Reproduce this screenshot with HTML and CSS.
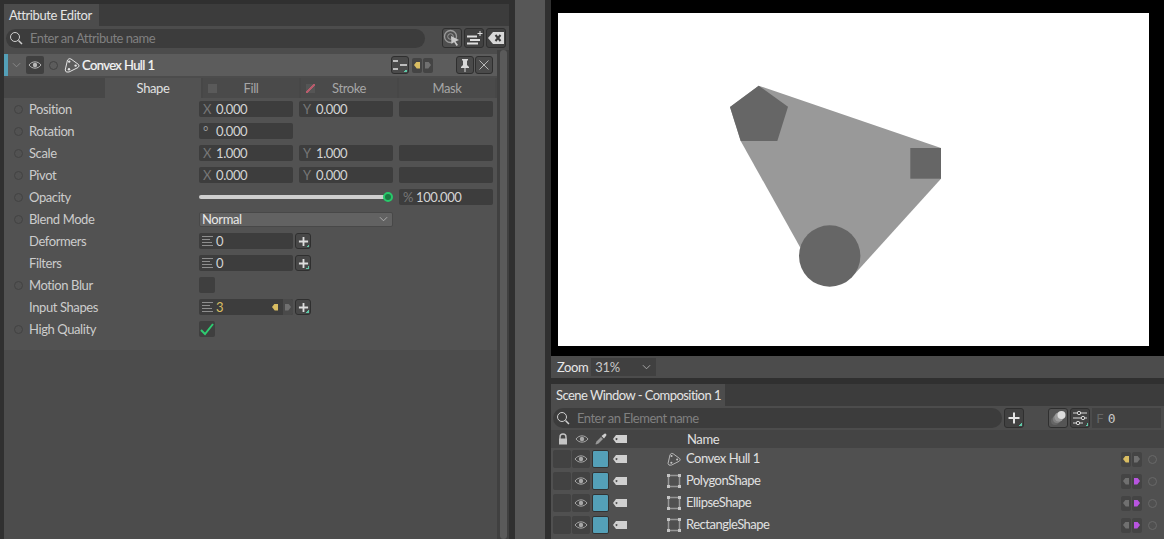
FILE: index.html
```html
<!DOCTYPE html>
<html lang="en">
<head>
  <meta charset="UTF-8">
  <title>Attribute Editor</title>
  <link rel="stylesheet" href="styles.css">
</head>
<body>

  <svg class="defs" width="0" height="0">
    <symbol id="eye" viewBox="0 0 14 10"><path d="M1 5 C4 .8 10 .8 13 5 C10 9.2 4 9.2 1 5Z" fill="none" stroke="currentColor"/><circle cx="7" cy="5" r="2.2" fill="currentColor"/></symbol>
    <symbol id="hull" viewBox="0 0 16 16"><path d="M3.5 3 Q5 .8 7 2 L14.5 7.5 Q16 9 14 10.5 L5 15 Q1.5 16 1.2 13 Z" fill="none" stroke="currentColor"/><circle cx="5.2" cy="4.6" r="1.2" fill="currentColor"/><circle cx="11.6" cy="8.6" r="1.2" fill="currentColor"/><circle cx="5" cy="12.2" r="1.2" fill="currentColor"/></symbol>
    <symbol id="shape" viewBox="0 0 14 14"><path d="M2 1.5H12M12.5 2V12M12 12.5H2M1.5 12V2" fill="none" stroke="#969696" stroke-width="1.5"/><path d="M0 0h3v3H0zM11 0h3v3h-3zM0 11h3v3H0zM11 11h3v3h-3z" fill="currentColor"/></symbol>
    <symbol id="tag" viewBox="0 0 14 8"><path d="M3 0H14V8H3L0 4Z M3.5 3a1 1 0 1 0 .01 0Z" fill="currentColor" fill-rule="evenodd"/></symbol>
    <symbol id="list" viewBox="0 0 11 11"><path d="M0 .5H11M0 3.5H8M0 6.5H10M0 9.5H11" stroke="currentColor"/></symbol>
    <symbol id="plus" viewBox="0 0 12 12"><path d="M6 1V11M1 6H11" stroke="currentColor" stroke-width="2"/></symbol>
    <symbol id="search" viewBox="0 0 14 14"><circle cx="6" cy="6" r="4.5" fill="none" stroke="currentColor"/><path d="M9.5 9.5L13 13" stroke="currentColor" stroke-width="1.5"/></symbol>
    <symbol id="chev" viewBox="0 0 10 6"><path d="M1 1L5 5L9 1" fill="none" stroke="currentColor"/></symbol>
  </svg>

  <div class="app">

    <section class="editor">
      <div class="tabbar"><div class="tab">Attribute Editor</div></div>
      <div class="editor-body">
        <div class="search-row">
          <div class="search search-attr">
            <svg class="ic-search"><use href="#search"/></svg>
            <span>Enter an Attribute name</span>
          </div>
          <span class="tool light">
            <svg viewBox="0 0 18 18"><circle cx="7.5" cy="7.5" r="6" fill="none" stroke="#9a9a9a" stroke-width="1.3"/><circle cx="7.5" cy="7.5" r="2.8" fill="none" stroke="#9a9a9a"/><path d="M8 7L16 11L12.5 12.5L15 16L13.5 17L11 13L8.5 15Z" fill="#c8c8c8"/></svg>
          </span>
          <span class="tool">
            <svg viewBox="0 0 18 18"><path d="M2 7.5H12M5 11H15M2 14.5H13" stroke="#e0e0e0" stroke-width="2"/><path d="M15 2V7M12.5 4.5H17.5" stroke="#e0e0e0"/></svg>
          </span>
          <span class="tool">
            <svg viewBox="0 0 18 18"><path d="M6 3H17V15H6L1 9Z" fill="#d8d8d8"/><path d="M8.5 6L13.5 12M13.5 6L8.5 12" stroke="#3a3a3a" stroke-width="2"/></svg>
          </span>
        </div>

        <div class="editor-main">
          <div class="editor-content">
            <div class="layer-head">
              <svg class="ic-chev"><use href="#chev"/></svg>
              <span class="eye-btn"><svg class="ic-eye"><use href="#eye"/></svg></span>
              <span class="dot"></span>
              <svg class="ic-hull"><use href="#hull"/></svg>
              <span class="layer-name">Convex Hull 1</span>
              <span class="head-right">
                <span class="tool small">
                  <svg viewBox="0 0 16 16"><path d="M1 4H6M1 12H6M8 8H15" stroke="#e4e4e4" stroke-width="1.6"/></svg>
                  <i class="corner"></i>
                </span>
                <span class="keys">
                  <span class="key"><i class="arrow-l yellow"></i></span>
                  <span class="key"><i class="arrow-r grey"></i></span>
                </span>
                <span class="tool small pin">
                  <svg viewBox="0 0 16 16"><path d="M5 2H11V3L10 4V8L12 10V11H4V10L6 8V4L5 3Z M7.5 11H8.5V15H7.5Z" fill="#d8d8d8"/></svg>
                </span>
                <span class="tool small">
                  <svg viewBox="0 0 16 16"><path d="M3.5 3.5L12.5 12.5M12.5 3.5L3.5 12.5" stroke="#b8b8b8"/></svg>
                </span>
              </span>
            </div>

            <div class="subtabs">
              <div class="subtab active">Shape</div>
              <div class="subtab"><i class="swatch"></i>Fill</div>
              <div class="subtab"><i class="swatch stroke"></i>Stroke</div>
              <div class="subtab">Mask</div>
            </div>

            <div class="rows">
              <div class="row"><span class="dot"></span><label>Position</label>
                <div class="field"><b>X</b>0.000</div><div class="field"><b>Y</b>0.000</div><div class="field"></div></div>
              <div class="row"><span class="dot"></span><label>Rotation</label>
                <div class="field"><b class="deg">°</b>0.000</div></div>
              <div class="row"><span class="dot"></span><label>Scale</label>
                <div class="field"><b>X</b>1.000</div><div class="field"><b>Y</b>1.000</div><div class="field"></div></div>
              <div class="row"><span class="dot"></span><label>Pivot</label>
                <div class="field"><b>X</b>0.000</div><div class="field"><b>Y</b>0.000</div><div class="field"></div></div>
              <div class="row"><span class="dot"></span><label>Opacity</label>
                <div class="slider"><i class="knob"></i></div>
                <div class="field"><b>%</b>100.000</div></div>
              <div class="row"><span class="dot"></span><label>Blend Mode</label>
                <div class="select">Normal<svg class="ic-chev"><use href="#chev"/></svg></div></div>
              <div class="row"><span class="dot none"></span><label>Deformers</label>
                <div class="field list"><svg class="ic-list"><use href="#list"/></svg>0</div>
                <span class="add"><svg><use href="#plus"/></svg><i class="corner"></i></span></div>
              <div class="row"><span class="dot none"></span><label>Filters</label>
                <div class="field list"><svg class="ic-list"><use href="#list"/></svg>0</div>
                <span class="add"><svg><use href="#plus"/></svg><i class="corner"></i></span></div>
              <div class="row"><span class="dot"></span><label>Motion Blur</label>
                <span class="check"></span></div>
              <div class="row"><span class="dot none"></span><label>Input Shapes</label>
                <div class="field list animated"><svg class="ic-list"><use href="#list"/></svg>3
                  <span class="inline-keys"><i class="arrow-l yellow"></i><span class="key-r"><i class="arrow-r grey"></i></span></span></div>
                <span class="add"><svg><use href="#plus"/></svg><i class="corner"></i></span></div>
              <div class="row"><span class="dot"></span><label>High Quality</label>
                <span class="check"><svg viewBox="0 0 16 16"><path d="M2 9L6 13L14 3" fill="none" stroke="#2ecc71" stroke-width="2"/></svg></span></div>
            </div>
          </div>
          <div class="scrollbar"><div class="thumb"></div></div>
        </div>
      </div>
    </section>

    <div class="gutter"></div>

    <section class="right">
      <div class="viewer">
        <svg class="canvas" viewBox="558 13 591 333">
          <rect x="558" y="13" width="591" height="333" fill="#fff"/>
          <path d="M758.7 85.7L941 148V178.7L851 278L800.5 248L740.7 141L730 107Z" fill="#999"/>
          <path d="M758.7 85.7L788 106.7L777.3 141H740.7L730 107Z" fill="#666"/>
          <rect x="910.3" y="148" width="30.7" height="30.7" fill="#666"/>
          <circle cx="829.7" cy="256" r="30.7" fill="#666"/>
        </svg>
      </div>

      <div class="zoom-bar">
        <span>Zoom</span>
        <div class="zoom-select">31%<svg class="ic-chev"><use href="#chev"/></svg></div>
      </div>

      <div class="scene">
        <div class="tabbar"><div class="tab">Scene Window - Composition 1</div></div>
        <div class="scene-search">
          <div class="search search-el">
            <svg class="ic-search"><use href="#search"/></svg>
            <span>Enter an Element name</span>
          </div>
          <span class="tool"><svg viewBox="0 0 18 18"><path d="M9 3.5V14.5M3.5 9H14.5" stroke="#e4e4e4" stroke-width="2"/></svg><i class="corner"></i></span>
          <span class="tool motion"><svg viewBox="0 0 18 18"><circle cx="6" cy="12" r="4" fill="#666"/><circle cx="8" cy="10" r="4" fill="#808080"/><circle cx="10" cy="8" r="4.5" fill="#999"/><circle cx="12.5" cy="6" r="4" fill="#dcdcdc"/></svg></span>
          <span class="tool"><svg viewBox="0 0 18 18"><path d="M2 4H6M10 4H16M2 9H10M14 9H16M2 14H5M9 14H12" stroke="#d8d8d8"/><circle cx="8" cy="4" r="1.7" fill="none" stroke="#d8d8d8"/><circle cx="12" cy="9" r="1.7" fill="none" stroke="#d8d8d8"/><circle cx="7" cy="14" r="1.7" fill="none" stroke="#d8d8d8"/></svg><i class="corner"></i></span>
          <div class="frame"><b>F</b>0</div>
        </div>

        <div class="scene-head">
          <svg class="col-ic" viewBox="0 0 12 12"><path d="M3 6V4a3 3 0 0 1 6 0V6" fill="none" stroke="#c4c4c4" stroke-width="1.4"/><rect x="2" y="5.5" width="8" height="6" fill="#c4c4c4"/></svg>
          <svg class="col-eye"><use href="#eye"/></svg>
          <svg class="col-ic" viewBox="0 0 12 12"><path d="M1 11.5L.5 11L1.5 8.5L6 4L8 6L3.5 10.5Z" fill="#999"/><path d="M6.5 3L8.5 1.5Q10 0 11.2 1Q12 2.2 10.5 3.5L9 5.5Z" fill="#d0d0d0"/></svg>
          <svg class="col-tag"><use href="#tag"/></svg>
          <span class="col-name">Name</span>
        </div>

        <div class="scene-row">
          <span class="cell"></span><span class="cell"><svg class="col-eye"><use href="#eye"/></svg></span><span class="color"></span><svg class="col-tag"><use href="#tag"/></svg>
          <svg class="el-ic"><use href="#hull"/></svg><span class="el-name">Convex Hull 1</span>
          <span class="el-keys"><span class="key"><i class="arrow-l yellow"></i></span><span class="key"><i class="arrow-r grey"></i></span></span><span class="dot"></span>
        </div>
        <div class="scene-row">
          <span class="cell"></span><span class="cell"><svg class="col-eye"><use href="#eye"/></svg></span><span class="color"></span><svg class="col-tag"><use href="#tag"/></svg>
          <svg class="el-ic"><use href="#shape"/></svg><span class="el-name">PolygonShape</span>
          <span class="el-keys"><span class="key"><i class="arrow-l grey"></i></span><span class="key"><i class="arrow-r purple"></i></span></span><span class="dot"></span>
        </div>
        <div class="scene-row">
          <span class="cell"></span><span class="cell"><svg class="col-eye"><use href="#eye"/></svg></span><span class="color"></span><svg class="col-tag"><use href="#tag"/></svg>
          <svg class="el-ic"><use href="#shape"/></svg><span class="el-name">EllipseShape</span>
          <span class="el-keys"><span class="key"><i class="arrow-l grey"></i></span><span class="key"><i class="arrow-r purple"></i></span></span><span class="dot"></span>
        </div>
        <div class="scene-row">
          <span class="cell"></span><span class="cell"><svg class="col-eye"><use href="#eye"/></svg></span><span class="color"></span><svg class="col-tag"><use href="#tag"/></svg>
          <svg class="el-ic"><use href="#shape"/></svg><span class="el-name">RectangleShape</span>
          <span class="el-keys"><span class="key"><i class="arrow-l grey"></i></span><span class="key"><i class="arrow-r purple"></i></span></span><span class="dot"></span>
        </div>
      </div>
    </section>
  </div>

</body>
</html>
```

FILE: styles.css
```css
:root {
  --dark: #303030;
  --strip: #3c3c3c;
  --panel: #4c4c4c;
  --body: #525252;
  --field: #3d3d3d;
  --text: #d4d4d4;
  --blue: #54a0b8;
  --yellow: #d9bd62;
  --purple: #b855e0;
}

html, body {
  margin: 0;
  height: 539px;
  overflow: hidden;
}

body {
  font-family: Lato, sans-serif;
  font-size: 13px;
  letter-spacing: -0.4px;
  color: var(--text);
  background: var(--dark);
}

.defs {
  display: block;
  height: 0;
}

.app {
  display: flex;
  height: 539px;
}

/* left panel */
.editor {
  width: 505px;
  margin: 4px 0 0 4px;
  display: flex;
  flex-direction: column;
}

.tabbar {
  display: flex;
  height: 22px;
  background: var(--strip);
  flex: none;
}

.tab {
  box-sizing: border-box;
  width: 95px;
  padding-left: 5px;
  line-height: 22px;
  white-space: nowrap;
  background: var(--panel);
  color: #e4e4e4;
}

.editor-body {
  flex: 1;
  background: var(--panel);
  display: flex;
  flex-direction: column;
}

.search-row {
  display: flex;
  align-items: center;
  height: 24px;
  padding-left: 2px;
  flex: none;
}

.search {
  display: flex;
  align-items: center;
  height: 19px;
  border-radius: 10px;
  background: #3c3c3c;
  color: #808080;
  letter-spacing: -0.5px;
}

.search-attr {
  width: 419px;
  margin-right: 15px;
}

.ic-search {
  width: 14px;
  height: 14px;
  margin: 0 7px 0 3px;
  color: #d0d0d0;
}

.tool {
  position: relative;
  display: block;
  box-sizing: border-box;
  width: 20px;
  height: 20px;
  margin-left: 2px;
  border: 1px solid #2f2f2f;
  border-radius: 3px;
  background: #414141;
  flex: none;
}

.tool.light {
  background: #4e4e4e;
}

.tool svg {
  display: block;
  width: 18px;
  height: 18px;
}

.tool.small {
  width: 18px;
  height: 18px;
  margin-left: 1px;
  background: #4a4a4a;
}

.tool.small svg {
  width: 16px;
  height: 16px;
}

.corner {
  position: absolute;
  right: 1px;
  bottom: 1px;
  width: 3px;
  height: 3px;
  background: linear-gradient(135deg, transparent 50%, #5fc9a8 50%);
}

.editor-main {
  display: flex;
  flex: 1;
}

.editor-content {
  width: 493px;
  padding-top: 4px;
  flex: none;
}

.scrollbar {
  width: 12px;
  background: #404040;
  padding: 0 2px 0 3px;
  box-sizing: border-box;
}

.thumb {
  height: 100%;
  background: #5a5a5a;
  border-radius: 4px;
}

.layer-head {
  display: flex;
  align-items: center;
  height: 22px;
  background: #5c5c5c;
  border-left: 4px solid var(--blue);
}

.layer-head .ic-chev {
  width: 9px;
  height: 6px;
  margin: 0 5px 0 4px;
  color: #8c8c8c;
}

.eye-btn {
  display: flex;
  align-items: center;
  justify-content: center;
  width: 18px;
  height: 18px;
  border-radius: 2px;
  background: #404040;
  margin-right: 5px;
}

.ic-eye {
  width: 14px;
  height: 10px;
  color: #b8b8b8;
}

.dot {
  display: block;
  box-sizing: border-box;
  width: 9px;
  height: 9px;
  border: 1px solid #424242;
  border-radius: 50%;
  flex: none;
}

.dot.none {
  border: 0;
}

.ic-hull {
  width: 16px;
  height: 16px;
  margin-left: 6px;
  color: #e4e4e4;
}

.layer-name {
  margin-left: 2px;
  color: #f6f6f6;
  letter-spacing: -0.6px;
  -webkit-text-stroke: 0.2px #f6f6f6;
}

.head-right {
  display: flex;
  align-items: center;
  margin-left: auto;
  margin-right: 4px;
}

.keys,
.el-keys {
  display: flex;
  gap: 1px;
  margin-left: 3px;
}

.key {
  display: flex;
  align-items: center;
  justify-content: center;
  width: 10px;
  height: 15px;
  background: #444;
  border-radius: 2px;
}

.arrow-l,
.arrow-r {
  display: block;
  width: 6px;
  height: 7px;
}

.arrow-l {
  clip-path: polygon(0 50%, 45% 0, 100% 0, 100% 100%, 45% 100%);
}

.arrow-r {
  clip-path: polygon(0 0, 55% 0, 100% 50%, 55% 100%, 0 100%);
}

.yellow {
  background: var(--yellow);
}

.grey {
  background: #707070;
}

.purple {
  background: var(--purple);
}

.tool.pin {
  margin-left: 23px;
}

.subtabs {
  display: flex;
  height: 20px;
  margin-top: 2px;
  padding-left: 101px;
  gap: 2px;
  background: #474747;
}

.subtab {
  position: relative;
  flex: none;
  width: 96px;
  line-height: 20px;
  text-align: center;
  color: #a6a6a6;
  background: #4a4a4a;
}

.subtab.active {
  color: #e0e0e0;
  background: var(--body);
}

.swatch {
  position: absolute;
  left: 5px;
  top: 6px;
  width: 9px;
  height: 9px;
  background: #5a5a5a;
}

.swatch.stroke {
  background: linear-gradient(135deg, #555 42%, #b85c6c 42%, #b85c6c 58%, #555 58%);
}

.rows {
  background: var(--body);
  padding-bottom: 10px;
}

.row {
  display: flex;
  align-items: center;
  height: 22px;
  gap: 6px;
  box-sizing: border-box;
}

.row .dot {
  margin-left: 10px;
}

.row label {
  width: 170px;
  margin-right: -6px;
  color: #cccccc;
  flex: none;
}

.field {
  display: flex;
  align-items: center;
  box-sizing: border-box;
  width: 94px;
  height: 16px;
  padding-left: 4px;
  border-radius: 2px;
  background: var(--field);
  color: #d4d4d4;
  flex: none;
}

.field b {
  width: 13px;
  flex: none;
  font-weight: 400;
  color: #777;
}

.field b.deg {
  color: #999;
}

.field.list {
  padding-left: 3px;
}

.field.list .ic-list {
  width: 11px;
  height: 11px;
  margin-right: 3px;
  color: #8e8e8e;
}

.field.animated {
  color: var(--yellow);
}

.inline-keys {
  display: flex;
  align-items: center;
  margin-left: auto;
  gap: 5px;
  height: 100%;
}

.key-r {
  display: flex;
  align-items: center;
  height: 100%;
  padding: 0 2px;
  background: #4a4a4a;
  border-radius: 0 2px 2px 0;
}

.slider {
  position: relative;
  width: 189px;
  height: 4px;
  margin-right: 5px;
  border-radius: 2px;
  background: #cfcfcf;
  flex: none;
}

.knob {
  position: absolute;
  right: -5px;
  top: -3px;
  width: 10px;
  height: 10px;
  box-sizing: border-box;
  border: 2.5px solid #27c96a;
  border-radius: 50%;
  background: #1b7a44;
}

.select {
  display: flex;
  align-items: center;
  justify-content: space-between;
  box-sizing: border-box;
  width: 194px;
  height: 15px;
  padding: 0 4px 0 2px;
  border: 1px solid #484848;
  border-radius: 2px;
  background: #626262;
  color: #e8e8e8;
}

.select .ic-chev {
  width: 9px;
  height: 6px;
  color: #b4b4b4;
}

.add {
  position: relative;
  display: flex;
  align-items: center;
  justify-content: center;
  box-sizing: border-box;
  width: 16px;
  height: 16px;
  margin-left: -4px;
  border: 1px solid #2f2f2f;
  border-radius: 3px;
  background: #474747;
  color: #dedede;
}

.add svg {
  width: 11px;
  height: 11px;
}

.check {
  display: block;
  width: 16px;
  height: 16px;
  border-radius: 2px;
  background: #3f3f3f;
}

.check svg {
  display: block;
  width: 16px;
  height: 16px;
}

.gutter {
  width: 30px;
  margin-left: 6px;
  background: #575757;
  flex: none;
}

/* right panel */
.right {
  width: 613px;
  margin-left: 6px;
  flex: none;
  display: flex;
  flex-direction: column;
}

.viewer {
  height: 356px;
  background: #000;
  padding: 13px 15px 10px 7px;
  box-sizing: border-box;
  flex: none;
}

.canvas {
  display: block;
  width: 591px;
  height: 333px;
}

.zoom-bar {
  display: flex;
  align-items: center;
  height: 22px;
  padding-left: 6px;
  background: var(--panel);
  color: #e8e8e8;
  flex: none;
}

.zoom-select {
  display: flex;
  align-items: center;
  justify-content: space-between;
  box-sizing: border-box;
  width: 65px;
  height: 18px;
  margin-left: 3px;
  padding: 0 5px 0 4px;
  background: #404040;
  color: #c8c8c8;
}

.zoom-select .ic-chev {
  width: 9px;
  height: 6px;
  color: #b0b0b0;
}

.scene {
  margin-top: 6px;
  flex: 1;
  background: #505050;
}

.scene .tab {
  width: 174px;
  letter-spacing: -0.55px;
}

.scene-search {
  display: flex;
  align-items: center;
  height: 24px;
  padding-left: 2px;
  background: var(--panel);
}

.search-el {
  width: 449px;
  height: 20px;
}

.tool.motion {
  margin-left: 24px;
  background: #555;
}

.frame {
  display: flex;
  align-items: center;
  box-sizing: border-box;
  width: 69px;
  height: 20px;
  margin-left: 2px;
  padding-left: 4px;
  background: #414141;
  font-family: "DejaVu Sans Mono", monospace;
  font-size: 13px;
  letter-spacing: 0;
  color: #c8c8c8;
}

.frame b {
  margin-right: 4px;
  font-weight: 400;
  color: #666;
}

.scene-head {
  display: flex;
  align-items: center;
  height: 18px;
  background: #444;
  padding-left: 6px;
  color: #e0e0e0;
}

.col-ic {
  width: 12px;
  height: 12px;
  margin-right: 6px;
}

.col-eye {
  display: block;
  width: 14px;
  height: 10px;
  color: #a8a8a8;
  margin-right: 6px;
}

.col-tag {
  display: block;
  width: 14px;
  height: 8px;
  color: #d0d0d0;
  flex: none;
}

.col-name {
  margin-left: 60px;
}

.scene-row {
  display: flex;
  align-items: center;
  height: 22px;
  padding-left: 2px;
}

.cell {
  display: flex;
  align-items: center;
  justify-content: center;
  width: 18px;
  height: 18px;
  margin-right: 1px;
  border-radius: 2px;
  background: #424242;
  flex: none;
}

.cell .col-eye {
  margin: 0;
}

.color {
  box-sizing: border-box;
  width: 17px;
  height: 18px;
  margin: 0 4px 0 1px;
  border: 1px solid #333;
  border-radius: 2px;
  background: var(--blue);
  flex: none;
}

.el-ic {
  width: 14px;
  height: 14px;
  margin-left: 40px;
  color: #c4c4c4;
  flex: none;
}

.el-name {
  margin-left: 5px;
  padding-bottom: 2px;
  color: #e0e0e0;
  letter-spacing: -0.5px;
}

.el-keys {
  margin-left: auto;
  margin-right: 6px;
}

.scene-row .dot {
  margin-right: 7px;
  border-color: #686868;
}
```
